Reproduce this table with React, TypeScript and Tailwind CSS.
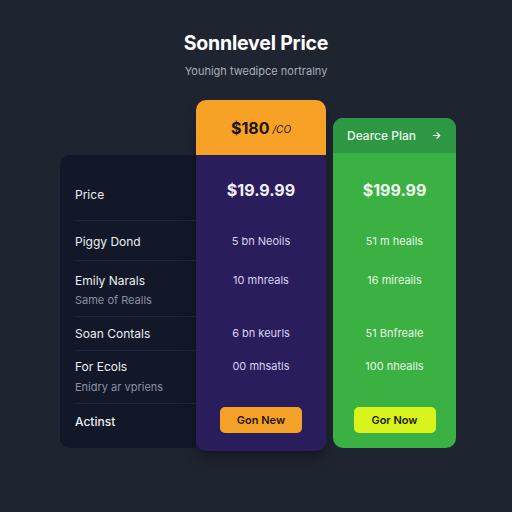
import React from "react";

type Row = {
  label: string;
  sub?: string;
  purple: string;
  green: string;
  h: string;
  pt: string;
};

const rows: Row[] = [
  { label: "Piggy Dond", purple: "5 bn Neoils", green: "51 m heails", h: "h-[40px]", pt: "pt-[13px]" },
  { label: "Emily Narals", sub: "Same of Realls", purple: "10 mhreals", green: "16 mireails", h: "h-[56px]", pt: "pt-[12px]" },
  { label: "Soan Contals", purple: "6 bn keurls", green: "51 Bnfreale", h: "h-[34px]", pt: "pt-[9px]" },
  { label: "For Ecols", sub: "Enidry ar vpriens", purple: "00 mhsatls", green: "100 nhealls", h: "h-[53px]", pt: "pt-[8px]" },
];

export default function App() {
  return (
    <main
      className="min-h-[512px] w-full bg-[#1f2431] pt-[31px] text-white"
      style={{ fontFamily: "Inter, 'Liberation Sans', sans-serif" }}
    >
      <h1 className="text-center text-[19.5px] font-bold leading-[24px] tracking-[-0.2px] text-white">
        Sonnlevel Price
      </h1>
      <p className="mt-[8px] text-center text-[11px] leading-[16px] text-[#a9afbc]">
        Youhigh twedipce nortralny
      </p>

      <div className="mt-[21px] flex items-start justify-center pl-[4px]">
        {/* feature labels */}
        <section className="mt-[55px] w-[136px] rounded-l-[10px] bg-[#121827]">
          <div className="h-[65px] pl-[15px] pt-[32px] text-[12px] leading-[16px] text-[#eceef3]">
            Price
          </div>
          {rows.map((r) => (
            <div key={r.label} className={`${r.h} ${r.pt} ml-[15px] border-t border-[#1e2536]`}>
              <div className="text-[12px] leading-[16px] text-[#eceef3]">{r.label}</div>
              {r.sub && (
                <div className={`${r.label === "For Ecols" ? "mt-[4px]" : "mt-[3px]"} text-[11px] leading-[16px] text-[#8a91a2]`}>
                  {r.sub}
                </div>
              )}
            </div>
          ))}
          <div className="ml-[15px] h-[45px] border-t border-[#1e2536] pt-[10px] text-[12px] font-medium leading-[16px] text-[#eceef3]">
            Actinst
          </div>
        </section>

        {/* orange / purple plan */}
        <section className="w-[130px] overflow-hidden rounded-[10px] bg-[#2a1d5b] pb-[3px] shadow-lg shadow-black/30">
          <div className="flex h-[55px] items-center justify-center gap-[3px] bg-[#f7a227] text-[#1c1406]">
            <span className="text-[16px] font-bold">$180</span>
            <span className="mt-[3px] text-[10px] italic">/CO</span>
          </div>
          <div className="h-[65px] pt-[24px] text-center text-[16px] font-bold leading-[22px] text-[#f1eefc]">
            $19.9.99
          </div>
          {rows.map((r) => (
            <div key={r.label} className={`${r.h} ${r.pt} text-center text-[11px] leading-[16px] text-[#d9d4f2]`}>
              {r.purple}
            </div>
          ))}
          <div className="flex h-[45px] justify-center pt-[4px]">
            <button className="h-[26px] w-[82px] rounded-[5px] bg-[#f6a228] text-[11px] font-semibold text-[#1e1608]">
              Gon New
            </button>
          </div>
        </section>

        {/* green plan */}
        <section className="ml-[7px] mt-[18px] w-[123px] overflow-hidden rounded-[10px] bg-[#3bb143]">
          <div className="flex h-[35px] items-center justify-between bg-[#2e9744] px-[14px] text-[12px] font-medium text-[#eef8ee]">
            <span>Dearce Plan</span>
            <svg width="11" height="11" viewBox="0 0 24 24" fill="none" stroke="currentColor" strokeWidth="2.5" strokeLinecap="round" strokeLinejoin="round">
              <path d="M5 12h14" />
              <path d="M13 6l6 6-6 6" />
            </svg>
          </div>
          <div className="h-[67px] pt-[26px] text-center text-[16px] font-bold leading-[22px] text-[#f2fbf2]">
            $199.99
          </div>
          {rows.map((r) => (
            <div key={r.label} className={`${r.h} ${r.pt} text-center text-[11px] leading-[16px] text-[#e6f6e6]`}>
              {r.green}
            </div>
          ))}
          <div className="flex h-[45px] justify-center pt-[4px]">
            <button className="h-[26px] w-[82px] rounded-[5px] bg-[#d9f41d] text-[11px] font-semibold text-[#1a1f06]">
              Gor Now
            </button>
          </div>
        </section>
      </div>
    </main>
  );
}
